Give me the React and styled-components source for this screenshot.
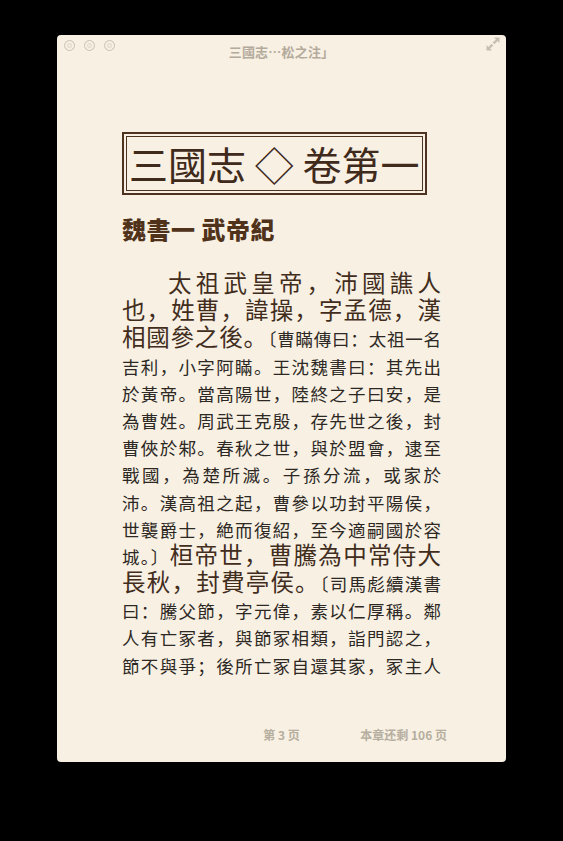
import React from "react";
import styled, { createGlobalStyle } from "styled-components";

const Global = createGlobalStyle`
  html, body { margin: 0; padding: 0; background: #000; }
  body { font-family: "Noto Sans CJK SC", "Noto Sans CJK TC", sans-serif; }
`;

const Page = styled.div`
  width: 563px;
  height: 841px;
  background: #000;
  padding: 35px 0 0 57px;
  box-sizing: border-box;
`;

const Window = styled.div`
  width: 449px;
  height: 727px;
  background: #f7f0e3;
  border-radius: 4px;
  display: flex;
  flex-direction: column;
  overflow: hidden;
`;

const TitleBar = styled.div`
  height: 22px;
  display: grid;
  grid-template-columns: 1fr auto 1fr;
  align-items: start;
  padding: 0 7px 0 7px;
`;

const Lights = styled.div`
  display: flex;
  gap: 9px;
  margin-top: 5px;
`;

const Light = styled.span`
  width: 9px;
  height: 9px;
  border-radius: 50%;
  border: 1px solid #cbc3b6;
  background: #f1eadd;
  box-shadow: inset 0 0 0 2px #f7f0e3, inset 0 0 0 3px #e3dbcd;
`;

const Title = styled.div`
  font-size: 13px;
  font-weight: 700;
  color: #b4aa9b;
  margin-top: 9px;
  line-height: 16px;
  letter-spacing: 0.2px;
`;

const Expand = styled.div`
  justify-self: end;
  margin-top: 2px;
  margin-right: -1px;
  display: flex;
`;

const Body = styled.div`
  flex: 1;
  padding: 0 65px;
  overflow: hidden;
`;

const BookTitle = styled.div`
  display: inline-block;
  margin-top: 75px;
  border: 2px solid #4e3320;
  padding: 2px;
`;

const BookTitleInner = styled.div`
  border: 1px solid #4e3320;
  padding: 0 3px 0 2px;
  font-size: 39px;
  line-height: 53px;
  color: #3f2a1b;
  white-space: nowrap;
`;

const Chapter = styled.h2`
  margin: 17px 0 0;
  font-size: 24px;
  line-height: 34px;
  font-weight: 900;
  color: #4f3219;
  letter-spacing: 0.5px;
`;

const Paragraph = styled.div`
  margin-top: 25px;
`;

const Line = styled.div`
  height: 27.2px;
  line-height: 27.2px;
  white-space: nowrap;
  text-align: justify;
  text-align-last: justify;
  text-justify: inter-character;
  text-indent: ${(p) => (p.$indent ? "46px" : "0")};
  font-size: 17.5px;
`;

const Main = styled.span`
  font-size: 23.5px;
  color: #422d1d;
  line-height: 1;
`;

const Note = styled.span`
  font-size: 17.5px;
  color: #2d2824;
  line-height: 1;
`;

const Footer = styled.div`
  height: 35px;
  display: grid;
  grid-template-columns: 1fr auto 1fr;
  align-items: start;
  padding: 0 59px;
  font-size: 12px;
  font-weight: 700;
  color: #b6ae9f;
  line-height: 16px;
`;

const FooterRight = styled.span`
  justify-self: end;
`;

const lines = [
  { indent: true, parts: [["m", "太祖武皇帝，沛國譙人"]] },
  { parts: [["m", "也，姓曹，諱操，字孟德，漢"]] },
  { parts: [["m", "相國參之後。"], ["n", "〔曹瞞傳曰：太祖一名"]] },
  { parts: [["n", "吉利，小字阿瞞。王沈魏書曰：其先出"]] },
  { parts: [["n", "於黃帝。當高陽世，陸終之子曰安，是"]] },
  { parts: [["n", "為曹姓。周武王克殷，存先世之後，封"]] },
  { parts: [["n", "曹俠於邾。春秋之世，與於盟會，逮至"]] },
  { parts: [["n", "戰國，為楚所滅。子孫分流，或家於"]] },
  { parts: [["n", "沛。漢高祖之起，曹參以功封平陽侯，"]] },
  { parts: [["n", "世襲爵士，絶而復紹，至今適嗣國於容"]] },
  { parts: [["n", "城。〕"], ["m", "桓帝世，曹騰為中常侍大"]] },
  { parts: [["m", "長秋，封費亭侯。"], ["n", "〔司馬彪續漢書"]] },
  { parts: [["n", "曰：騰父節，字元偉，素以仁厚稱。鄰"]] },
  { parts: [["n", "人有亡冢者，與節冢相類，詣門認之，"]] },
  { parts: [["n", "節不與爭；後所亡冢自還其家，冢主人"]] },
];

function ExpandIcon() {
  return (
    <svg width="14" height="14" viewBox="0 0 14 14" fill="#c6beb1">
      <path d="M8 0.5 H13.5 V6 L11.6 4.1 L8.4 7.3 L6.7 5.6 L9.9 2.4 Z" />
      <path d="M6 13.5 H0.5 V8 L2.4 9.9 L5.6 6.7 L7.3 8.4 L4.1 11.6 Z" />
    </svg>
  );
}

export default function App() {
  return (
    <Page lang="zh">
      <Global />
      <Window>
        <TitleBar>
          <Lights>
            <Light />
            <Light />
            <Light />
          </Lights>
          <Title>三國志…松之注」</Title>
          <Expand>
            <ExpandIcon />
          </Expand>
        </TitleBar>
        <Body>
          <BookTitle>
            <BookTitleInner>三國志 ◇ 卷第一</BookTitleInner>
          </BookTitle>
          <Chapter>魏書一 武帝紀</Chapter>
          <Paragraph>
            {lines.map((l, i) => (
              <Line key={i} $indent={l.indent}>
                {l.parts.map(([k, t], j) =>
                  k === "m" ? <Main key={j}>{t}</Main> : <Note key={j}>{t}</Note>
                )}
              </Line>
            ))}
          </Paragraph>
        </Body>
        <Footer>
          <span />
          <span>第 3 页</span>
          <FooterRight>本章还剩 106 页</FooterRight>
        </Footer>
      </Window>
    </Page>
  );
}
